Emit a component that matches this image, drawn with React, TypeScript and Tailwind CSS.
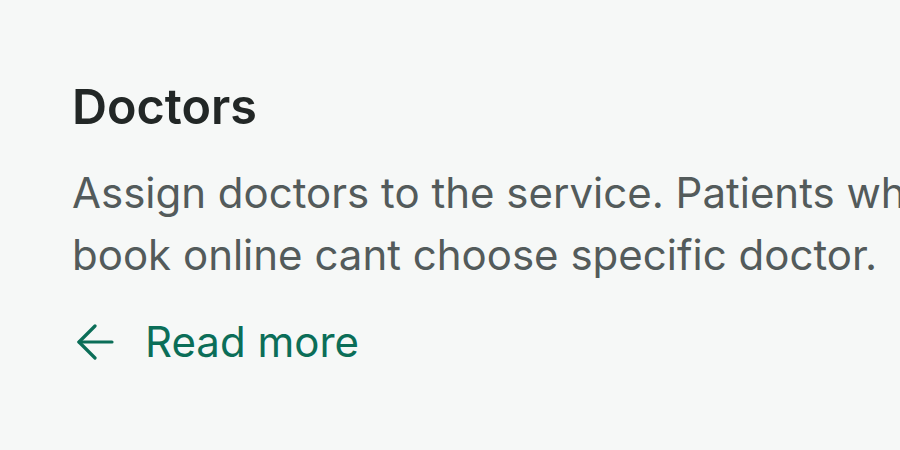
export default function App() {
  return (
    <div
      className="h-[450px] w-[900px] overflow-hidden bg-[#f6f8f7]"
      style={{ fontFamily: "Inter, 'Noto Sans', sans-serif" }}
    >
      <div className="w-[1000px] pl-[72px] pt-[79px]">
        <h2 className="text-[48.5px] font-semibold leading-[56px] text-[#222726]">
          Doctors
        </h2>
        <p className="mt-[27px] w-[880px] text-[42px] leading-[62px] text-[#535b5b]">
          Assign doctors to the service. Patients who book online cant choose
          specific doctor.
        </p>
        <a
          href="#"
          className="mt-[32px] flex items-center gap-[31px] text-[42px] font-normal leading-[48px] text-[#0b6e58]"
        >
          <svg
            className="ml-[4px]"
            width="38"
            height="36"
            viewBox="0 0 38 36"
            fill="none"
            stroke="currentColor"
            strokeWidth="3.2"
            strokeLinecap="round"
            strokeLinejoin="round"
          >
            <path d="M3 18h33" />
            <path d="M19 2 3 18l16 16" />
          </svg>
          Read more
        </a>
      </div>
    </div>
  );
}
